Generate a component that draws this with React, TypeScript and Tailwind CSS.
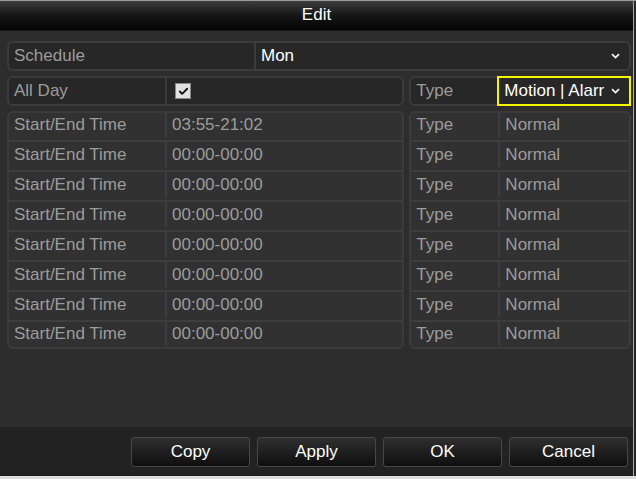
import { Check } from 'lucide-react';

const rows = ['03:55-21:02', '00:00-00:00', '00:00-00:00', '00:00-00:00', '00:00-00:00', '00:00-00:00', '00:00-00:00', '00:00-00:00'];

function Chevron() {
  return (
    <svg width="9" height="6" viewBox="0 0 9 6" className="shrink-0">
      <path d="M1 1.2 L4.5 4.6 L8 1.2" fill="none" stroke="#f2f2f2" strokeWidth="1.8" />
    </svg>
  );
}

function DialogButton({ label }: { label: string }) {
  return (
    <button
      type="button"
      className="flex h-[30px] w-[119px] items-center justify-center rounded-[3px] border border-[#474747] bg-gradient-to-b from-[#2f2f2f] to-[#0f0f0f] text-[17px] text-white"
    >
      {label}
    </button>
  );
}

function rowClass(i: number) {
  if (i === 0) return 'h-[27px] pb-[3px]';
  if (i === rows.length - 1) return 'h-[27px] border-t-2 border-[#3d3d3d] pb-[1px]';
  return 'h-[30px] border-t-2 border-[#3d3d3d] pb-[3px]';
}

export default function App() {
  return (
    <div className="flex h-[479px] w-[636px] flex-col bg-[#dcdcdc] font-['Liberation_Sans',Arial,sans-serif]">
      <div className="h-px bg-[#9a9a9a]" />
      <div className="flex h-[475px]">
        <div className="flex w-[633px] flex-col bg-[#2d2d2d]">
          {/* title */}
          <div className="flex h-[30px] items-center justify-center border-b border-[#151515] bg-gradient-to-b from-[#3e3e3e] via-[#161616] to-[#050505] pb-[2px] text-[17px] text-white">
            Edit
          </div>

          <div className="flex flex-1 flex-col pl-[7px] pr-[2px] pt-[10px]">
            {/* schedule */}
            <div className="flex h-[30px] w-[624px] overflow-hidden rounded-[6px] border-2 border-[#3b3b3b] bg-[#272727] text-[17px]">
              <div className="flex w-[247px] items-center border-r-2 border-[#3b3b3b] pl-[5px] text-[#9c9c9c]">Schedule</div>
              <div className="flex flex-1 items-center justify-between pl-[5px] pr-[9px] text-white">
                <span>Mon</span>
                <Chevron />
              </div>
            </div>

            {/* all day + type */}
            <div className="mt-[5px] flex h-[30px] gap-[5px] text-[17px]">
              <div className="flex w-[398px] overflow-hidden rounded-[6px] border-2 border-[#3b3b3b] bg-[#272727]">
                <div className="flex w-[158px] items-center border-r-2 border-[#3b3b3b] pl-[5px] pb-[1px] text-[#9c9c9c]">All Day</div>
                <div className="flex flex-1 items-center pl-[8px]">
                  <span className="flex h-[16px] w-[16px] items-center justify-center border border-[#8a8a8a] bg-[#e2e2e2]">
                    <Check className="h-[11px] w-[11px] text-[#111]" strokeWidth={4} />
                  </span>
                </div>
              </div>
              <div className="flex w-[222px] rounded-[6px] border-2 border-[#3b3b3b] bg-[#272727]">
                <div className="flex w-[86px] items-center pl-[5px] pb-[1px] text-[#9c9c9c]">Type</div>
                <div className="-my-[2px] -mr-[2px] flex flex-1 items-center justify-between border-2 border-[#f5f500] pl-[5px] pb-[1px] pr-[9px] text-white">
                  <span>Motion | Alarr</span>
                  <Chevron />
                </div>
              </div>
            </div>

            {/* table */}
            <div className="mt-[5px] flex gap-[5px] text-[17px]">
              <div className="w-[398px] overflow-hidden rounded-[6px] border-2 border-[#3b3b3b] bg-[#313131]">
                {rows.map((time, i) => (
                  <div key={i} className={`flex ${rowClass(i)}`}>
                    <div className="flex w-[158px] items-center border-r-2 border-[#3d3d3d] pl-[5px] text-[#9c9c9c]">Start/End Time</div>
                    <div className="flex flex-1 items-center pl-[5px] text-[#9c9c9c]">{time}</div>
                  </div>
                ))}
              </div>
              <div className="w-[222px] overflow-hidden rounded-[6px] border-2 border-[#3b3b3b] bg-[#313131]">
                {rows.map((_, i) => (
                  <div key={i} className={`flex ${rowClass(i)}`}>
                    <div className="flex w-[89px] items-center border-r-2 border-[#3d3d3d] pl-[5px] text-[#9c9c9c]">Type</div>
                    <div className="flex flex-1 items-center pl-[5px] text-[#9c9c9c]">Normal</div>
                  </div>
                ))}
              </div>
            </div>
          </div>

          {/* footer */}
          <div className="flex h-[49px] items-center justify-end gap-[7px] bg-[#222222] pr-[5px]">
            <DialogButton label="Copy" />
            <DialogButton label="Apply" />
            <DialogButton label="OK" />
            <DialogButton label="Cancel" />
          </div>
        </div>
        <div className="w-px bg-[#a8a8a8]" />
        <div className="flex-1 bg-[#262626]" />
      </div>
      <div className="flex-1 bg-[#dcdcdc]" />
    </div>
  );
}
